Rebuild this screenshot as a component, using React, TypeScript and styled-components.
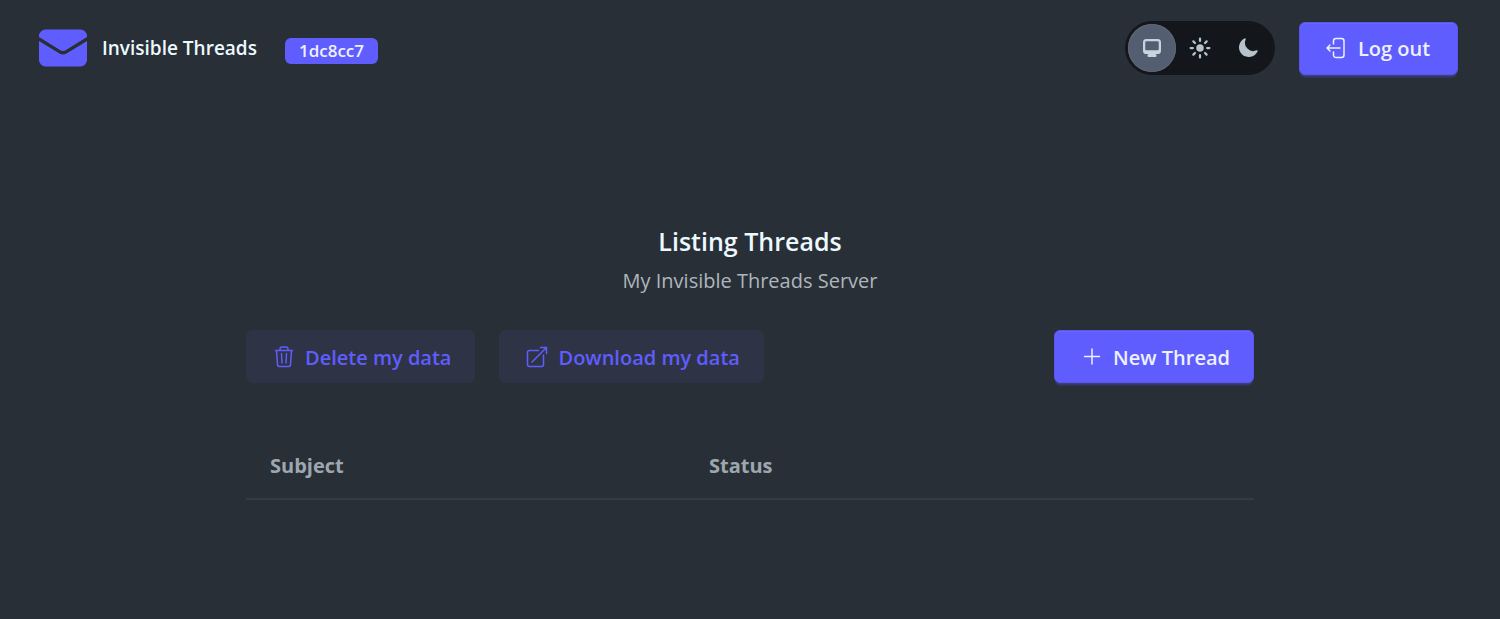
import React from "react";
import styled, { createGlobalStyle } from "styled-components";

const GlobalStyle = createGlobalStyle`
  *, *::before, *::after { box-sizing: border-box; }
  body {
    margin: 0;
    min-height: 100vh;
    background: #292f36;
    color: #ecf9ff;
    font-family: "Segoe UI", "Open Sans", "Noto Sans", sans-serif;
    font-size: 20px;
    line-height: 30px;
  }
  button { font: inherit; cursor: pointer; }
`;

const Header = styled.header`
  display: flex;
  align-items: center;
  justify-content: space-between;
  padding: 21px 42px 21px 38px;
`;

const Group = styled.div<{ $gap: number }>`
  display: flex;
  align-items: center;
  gap: ${(p) => p.$gap}px;
`;

const Brand = styled.a`
  display: flex;
  align-items: center;
  gap: 14px;
  color: inherit;
  font-size: 19px;
  font-weight: 600;
  line-height: 32px;
  text-decoration: none;
`;

const Badge = styled.span`
  padding: 0 14px;
  margin-top: 6px;
  border-radius: 6px;
  background: #605dff;
  color: #edf1fe;
  font-size: 17px;
  font-weight: 600;
  line-height: 26px;
`;

const ThemeSwitch = styled.fieldset`
  display: flex;
  margin: 0;
  padding: 3px;
  border: 0;
  border-radius: 27px;
  background: #13171b;
`;

const ThemeOption = styled.label`
  display: grid;
  place-items: center;
  width: 48px;
  height: 48px;
  border-radius: 50%;
  color: #b6c3cb;
  cursor: pointer;

  &:has(input:checked) {
    background: #535f70;
    box-shadow: inset 0 0 0 1px #5c6778;
    color: #c6d4dd;
  }
  input {
    appearance: none;
    grid-area: 1 / 1;
    width: 48px;
    height: 48px;
    margin: 0;
    border-radius: 50%;
  }
  svg { grid-area: 1 / 1; }
`;

const Button = styled.button<{ $soft?: boolean }>`
  display: flex;
  align-items: center;
  gap: 9px;
  min-width: 159px;
  height: 53px;
  padding: 2px 23px 0 25px;
  border: 1px solid ${(p) => (p.$soft ? "#2e3445" : "#5956eb")};
  border-radius: 6px;
  background: ${(p) => (p.$soft ? "#2e3445" : "#605dff")};
  color: ${(p) => (p.$soft ? "#605dff" : "#edf1fe")};
  box-shadow: ${(p) =>
    p.$soft ? "none" : "inset 0 1px 0 #6a67ff, 0 3px 3px -2px #605dff66, 0 4px 3px -2px #605dff33"};
  font-weight: 600;

  svg { margin-bottom: 2px; }
`;

const Main = styled.main`
  max-width: 1008px;
  margin: 0 auto;
  padding-top: 127px;
`;

const Heading = styled.div`
  text-align: center;
`;

const Title = styled.h1`
  margin: 0;
  font-size: 25px;
  font-weight: 600;
  line-height: 36px;
`;

const Subtitle = styled.p`
  margin: 7px 0 0;
  color: #adb6bd;
`;

const Actions = styled.div`
  display: flex;
  justify-content: space-between;
  margin: 34px 0 48px;
`;

const Table = styled.table`
  width: 100%;
  border-collapse: collapse;
  table-layout: fixed;
`;

const HeadCell = styled.th<{ $width?: string }>`
  width: ${(p) => p.$width ?? "auto"};
  padding: 20px 24px 17px;
  border-bottom: 2px solid #343b43;
  color: #9ea7b0;
  font-weight: 700;
  text-align: left;
`;

const LineIcon = ({ children }: { children: React.ReactNode }) => (
  <svg width="24" height="24" viewBox="0 0 24 24" fill="none" stroke="currentColor" strokeWidth="1.5" strokeLinecap="round" strokeLinejoin="round" aria-hidden="true">
    {children}
  </svg>
);

const SolidIcon = ({ d }: { d: string }) => (
  <svg width="24" height="24" viewBox="0 0 16 16" fill="currentColor" aria-hidden="true">
    <path fillRule="evenodd" d={d} />
  </svg>
);

const themes = [
  {
    name: "System theme",
    d: "M2 4.25A2.25 2.25 0 0 1 4.25 2h7.5A2.25 2.25 0 0 1 14 4.25v5.5A2.25 2.25 0 0 1 11.75 12h-1.312c.1.128.21.248.328.36a.75.75 0 0 1 .234.545v.345a.75.75 0 0 1-.75.75h-4.5a.75.75 0 0 1-.75-.75v-.345a.75.75 0 0 1 .234-.545c.118-.111.228-.232.328-.36H4.25A2.25 2.25 0 0 1 2 9.75v-5.5Zm2.25-.75a.75.75 0 0 0-.75.75v4.5c0 .414.336.75.75.75h7.5a.75.75 0 0 0 .75-.75v-4.5a.75.75 0 0 0-.75-.75h-7.5Z",
  },
  {
    name: "Light theme",
    d: "M8 1a.75.75 0 0 1 .75.75v1.5a.75.75 0 0 1-1.5 0v-1.5A.75.75 0 0 1 8 1ZM10.5 8a2.5 2.5 0 1 1-5 0 2.5 2.5 0 0 1 5 0ZM12.95 4.11a.75.75 0 1 0-1.06-1.06l-1.062 1.06a.75.75 0 0 0 1.061 1.062l1.06-1.061ZM15 8a.75.75 0 0 1-.75.75h-1.5a.75.75 0 0 1 0-1.5h1.5A.75.75 0 0 1 15 8ZM11.89 12.95a.75.75 0 0 0 1.06-1.06l-1.06-1.062a.75.75 0 0 0-1.062 1.061l1.061 1.06ZM8 12a.75.75 0 0 1 .75.75v1.5a.75.75 0 0 1-1.5 0v-1.5A.75.75 0 0 1 8 12ZM5.172 11.89a.75.75 0 0 0-1.061-1.062L3.05 11.89a.75.75 0 1 0 1.06 1.06l1.06-1.06ZM4 8a.75.75 0 0 1-.75.75h-1.5a.75.75 0 0 1 0-1.5h1.5A.75.75 0 0 1 4 8ZM4.11 5.172A.75.75 0 0 0 5.173 4.11L4.11 3.05a.75.75 0 1 0-1.06 1.06l1.06 1.06Z",
  },
  {
    name: "Dark theme",
    d: "M14.438 10.148c.19-.425-.321-.787-.748-.601A5.5 5.5 0 0 1 6.453 2.31c.186-.427-.176-.938-.6-.748a6.501 6.501 0 1 0 8.585 8.586Z",
  },
];

export default function App() {
  return (
    <>
      <GlobalStyle />
      <Header>
        <Group $gap={28}>
          <Brand href="#">
            <svg width="50" height="38" viewBox="0 0 50 38" fill="#605dff" aria-hidden="true">
              <path d="M1 8V7A6.500 6.500 0 0 1 7.500 .5H42.500A6.500 6.500 0 0 1 49 7V8L28 21Q25 23 22 21Z" />
              <path d="M1 12L21.500 24.500Q25 26.500 28.500 24.500L49 12V31A6.500 6.500 0 0 1 42.500 37.500H7.500A6.500 6.500 0 0 1 1 31Z" />
            </svg>
            Invisible Threads
          </Brand>
          <Badge>1dc8cc7</Badge>
        </Group>
        <Group $gap={24}>
          <ThemeSwitch aria-label="Theme">
            {themes.map((theme, i) => (
              <ThemeOption key={theme.name}>
                <input type="radio" name="theme" aria-label={theme.name} defaultChecked={i === 0} />
                <SolidIcon d={theme.d} />
              </ThemeOption>
            ))}
          </ThemeSwitch>
          <Button>
            <LineIcon>
              <path d="M8.500 8V5a2.500 2.500 0 0 1 2.500-2.500h5.500A2.500 2.500 0 0 1 19 5v14a2.500 2.500 0 0 1-2.500 2.500H11A2.500 2.500 0 0 1 8.500 19v-3M15 12H2M5 9l-3 3 3 3" />
            </LineIcon>
            Log out
          </Button>
        </Group>
      </Header>
      <Main>
        <Heading>
          <Title>Listing Threads</Title>
          <Subtitle>My Invisible Threads Server</Subtitle>
        </Heading>
        <Actions>
          <Group $gap={24}>
            <Button $soft>
              <LineIcon>
                <path d="M3.500 5.500h17M4.500 5.500l1 14a2 2 0 0 0 2 2h9a2 2 0 0 0 2-2l1-14M8 5.500V4a2 2 0 0 1 2-2h4a2 2 0 0 1 2 2v1.500M9.500 8.500l.5 9.500M14.500 8.500l-.5 9.500" />
              </LineIcon>
              Delete my data
            </Button>
            <Button $soft>
              <LineIcon>
                <path d="M13.500 5.500H4.500A2 2 0 0 0 2.500 7.500v12a2 2 0 0 0 2 2h12a2 2 0 0 0 2-2V10M7 17L21 3M15.500 2.500H21.500V8.500" />
              </LineIcon>
              Download my data
            </Button>
          </Group>
          <Button>
            <LineIcon>
              <path d="M12 4v15M4.500 11.500h15" />
            </LineIcon>
            New Thread
          </Button>
        </Actions>
        <Table>
          <thead>
            <tr>
              <HeadCell scope="col" $width="439px">Subject</HeadCell>
              <HeadCell scope="col">Status</HeadCell>
            </tr>
          </thead>
        </Table>
      </Main>
    </>
  );
}
